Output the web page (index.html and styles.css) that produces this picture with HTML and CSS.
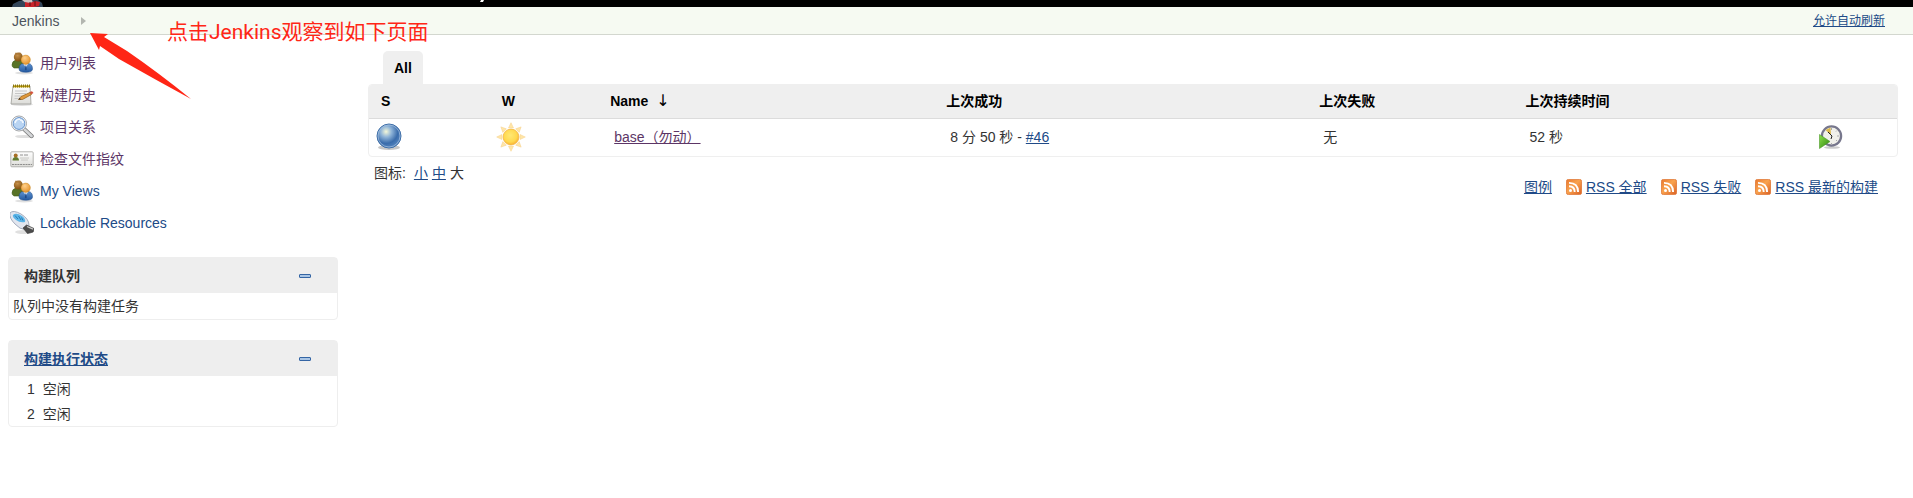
FILE: index.html
```html
<!DOCTYPE html>
<html lang="zh-CN">
<head>
<meta charset="utf-8">
<meta name="viewport" content="width=device-width, initial-scale=1">
<title>Jenkins</title>
<link rel="stylesheet" href="styles.css">
</head>
<body>
<svg class="defs" aria-hidden="true">
  <defs>
    <linearGradient id="orange" x1="0" y1="0" x2="1" y2="1"><stop offset="0" stop-color="#e8782e"/><stop offset=".45" stop-color="#f9a34e"/><stop offset="1" stop-color="#d95f23"/></linearGradient>
    <radialGradient id="ball" cx=".38" cy=".32" r=".65"><stop offset="0" stop-color="#f5f8d8"/><stop offset=".35" stop-color="#8fb4d8"/><stop offset=".75" stop-color="#3a6cab"/><stop offset="1" stop-color="#4f80bb"/></radialGradient>
    <radialGradient id="sun" cx=".45" cy=".4" r=".6"><stop offset="0" stop-color="#ffe873"/><stop offset=".7" stop-color="#ffd84e"/><stop offset="1" stop-color="#f9b233"/></radialGradient>
    <radialGradient id="brown" cx=".4" cy=".3" r=".7"><stop offset="0" stop-color="#c9924d"/><stop offset="1" stop-color="#81500f"/></radialGradient>
    <radialGradient id="face" cx=".4" cy=".3" r=".7"><stop offset="0" stop-color="#ffd08a"/><stop offset="1" stop-color="#e5932c"/></radialGradient>
    <linearGradient id="blue" x1="0" y1="0" x2="0" y2="1"><stop offset="0" stop-color="#5d92d0"/><stop offset="1" stop-color="#2459a0"/></linearGradient>
    <linearGradient id="paper" x1="0" y1="0" x2="0" y2="1"><stop offset="0" stop-color="#fff"/><stop offset="1" stop-color="#dcdcd8"/></linearGradient>
    <linearGradient id="play" x1="0" y1="0" x2="1" y2="1"><stop offset="0" stop-color="#8be04a"/><stop offset="1" stop-color="#2f8510"/></linearGradient>
    <symbol id="i-people" viewBox="0 0 24 24">
      <ellipse cx="14" cy="22" rx="9" ry="1.500" fill="#000" opacity=".12"/>
      <path d="M2 14q0-4 4-5h5q4 1 4 5v3H4q-2-1-2-3z" fill="#587327" stroke="#3f5a17" stroke-width=".6"/>
      <circle cx="8.300" cy="6" r="4.500" fill="url(#brown)"/><path d="M5 3.500l.6-2 2 1 2.700-1 1 2z" fill="#a87636"/>
      <path d="M9 18q0-5 4-5.500h5.500q4 .5 4 5.500 0 3.300-6.700 3.300T9 18z" fill="url(#blue)" stroke="#204a87" stroke-width=".5"/>
      <path d="M13.500 13h4.500l-2.200 3.500z" fill="#e6eefa"/><path d="M15.500 14.500h.7l.5 4-.9 1-.9-1z" fill="#204a87"/>
      <circle cx="15.700" cy="8.800" r="4.700" fill="url(#face)" stroke="#c17d11" stroke-width=".4"/>
    </symbol>
    <symbol id="i-note" viewBox="0 0 24 24">
      <ellipse cx="12" cy="21.500" rx="11" ry="1.500" fill="#000" opacity=".13"/>
      <path d="M3 3h17l1 18H1z" fill="url(#paper)" stroke="#9a9a96" stroke-width=".8"/>
      <path d="M3 2.500h17v1.800H3z" fill="#c4a000"/><path d="M3.500 1.500v3m2-3v3m2-3v3m2-3v3m2-3v3m2-3v3m2-3v3m2-3v3m2-3v3" stroke="#8b7710"/>
      <path d="M5 8h12M5 10.500h11M4.500 13h7M4.500 15.500h4" stroke="#c6c6c6"/>
      <path d="M8.500 16.500l2.500-3 9-4 1.500 2-9 5z" fill="#e0983b" stroke="#905c15" stroke-width=".7"/><path d="M19.500 9l2.500-.8 1.500 1.800-2 1.300z" fill="#d3503c"/><path d="M8.500 16.500l2.500-.2-1.500-1.300z" fill="#222"/>
    </symbol>
    <symbol id="i-search" viewBox="0 0 24 24">
      <ellipse cx="14" cy="21.500" rx="9" ry="1.600" fill="#000" opacity=".13"/>
      <path d="M14 14l7.500 7" stroke="#777" stroke-width="4.400" stroke-linecap="round"/><path d="M14 14l7.500 7" stroke="#d4d6d8" stroke-width="2.800" stroke-linecap="round"/>
      <circle cx="9" cy="8.500" r="7.500" fill="#fff" stroke="#a2a5a8"/><circle cx="9" cy="8.500" r="5.900" fill="#b9d4f2" stroke="#5486c4" stroke-width=".9"/>
      <path d="M5 8q1-4 5-4M10 5q3 0 3 3" fill="none" stroke="#f2f8ff" stroke-width="1.600"/>
    </symbol>
    <symbol id="i-card" viewBox="0 0 24 24">
      <rect x=".8" y="4.800" width="22.400" height="15" rx="1" fill="url(#paper)" stroke="#adada9" stroke-width=".9"/>
      <path d="M2.500 13.500q0-3.500 3.200-3.500T9 13.500z" fill="#617d31"/><circle cx="5.700" cy="8.500" r="2" fill="#a76f25"/>
      <path d="M10 8h3m1 0h4" stroke="#888" stroke-width=".9"/><path d="M10 11h9M11 13h7" stroke="#c4c4c0" stroke-width=".9"/><path d="M2 17.500h20" stroke="#777" stroke-width=".8" stroke-dasharray="2 .7"/>
    </symbol>
    <symbol id="i-usb" viewBox="0 0 24 24">
      <ellipse cx="14" cy="21" rx="9" ry="2" fill="#000" opacity=".12"/>
      <path d="M0 2q3-3.500 11 1 8 5 8 11 0 4.500-4 4.500-5 0-10-5.500-6-6-5-11z" fill="#e2e6ef" stroke="#9ba5b7" stroke-width=".9"/>
      <path d="M3 4q3-3 9 1 4 3 3 6-5 1-9-2Q2 6 3 4z" fill="#5bb5e8"/><path d="M5 4.500l3 3.500m.5-3l2.500 4m.5-2.500l1.500 3" stroke="#1c6ca6" stroke-width=".8"/>
      <path d="M13 17l3.500-3 7.500 3.500-.8 3.500-5.700 1.500z" fill="#4c4c4c" stroke="#333" stroke-width=".6"/><path d="M17 15.500l6 2.700" stroke="#c9c9c9" stroke-width="1.300"/>
    </symbol>
    <symbol id="i-rss" viewBox="0 0 16 16">
      <rect x=".4" y=".4" width="15.200" height="15.200" rx="2" fill="url(#orange)" stroke="#de7431" stroke-width=".8"/>
      <circle cx="4.500" cy="11.500" r="1.500" fill="#fff"/><path d="M3 7.300q5.700 0 5.700 5.700M3 3.900q9.100 0 9.100 9.100" fill="none" stroke="#fff" stroke-width="1.900"/>
    </symbol>
    <symbol id="i-minus" viewBox="0 0 12 4"><rect x=".5" y=".5" width="11" height="3" rx=".5" fill="#a9c5e5" stroke="#3465a4"/></symbol>
  </defs>
</svg>

<header class="banner">
  <svg class="butler" width="34" height="7" viewBox="0 0 34 7" aria-hidden="true"><path d="M1 7l1-3 6-3 4-1h15l4 3 1 4z" fill="#34465a"/><path d="M11 0h10l1 3-6 1z" fill="#cfc3c3"/><path d="M14 2l5 1 5-2 5 1-1 4-5 1H14z" fill="#c9242b"/><path d="M19 2v4M24 1v5" stroke="#5a1518"/></svg>
  <svg class="caption-tail" width="5" height="2" viewBox="0 0 5 2" aria-hidden="true"><path d="M1 0h3l-1 2H0z" fill="#fff"/></svg>
</header>
<nav class="crumbs">
  <div class="trail"><a href="#">Jenkins</a><svg width="5" height="8" viewBox="0 0 5 8" aria-hidden="true"><path d="M0 0l5 4-5 4z" fill="#b3b6b0"/></svg></div>
  <a class="refresh" href="#">允许自动刷新</a>
</nav>

<div class="note">
  <span>点击Jenkins观察到如下页面</span>
  <svg width="101" height="67" viewBox="0 0 101 67" aria-hidden="true"><path d="M0 0L18 1l-4 3 23 14q32 22 64 48Q66 47 29 26L10 13l-1 4z" fill="#ff2616"/></svg>
</div>

<div class="page">
  <aside class="side">
    <ul class="tasks">
      <li><a class="seen" href="#"><svg><use href="#i-people"/></svg>用户列表</a></li>
      <li><a class="seen" href="#"><svg><use href="#i-note"/></svg>构建历史</a></li>
      <li><a class="seen" href="#"><svg><use href="#i-search"/></svg>项目关系</a></li>
      <li><a class="seen" href="#"><svg><use href="#i-card"/></svg>检查文件指纹</a></li>
      <li><a href="#"><svg><use href="#i-people"/></svg>My Views</a></li>
      <li><a href="#"><svg><use href="#i-usb"/></svg>Lockable Resources</a></li>
    </ul>
    <section class="pane">
      <h2><span>构建队列</span><button type="button" aria-label="折叠构建队列"><svg><use href="#i-minus"/></svg></button></h2>
      <p>队列中没有构建任务</p>
    </section>
    <section class="pane">
      <h2><a href="#">构建执行状态</a><button type="button" aria-label="折叠构建执行状态"><svg><use href="#i-minus"/></svg></button></h2>
      <table class="executors">
        <tr><td>1</td><td>空闲</td></tr>
        <tr><td>2</td><td>空闲</td></tr>
      </table>
    </section>
  </aside>

  <main class="main">
    <div class="tabs"><a href="#">All</a></div>
    <div class="jobs">
      <table>
        <colgroup><col class="c-status"><col class="c-weather"><col class="c-name"><col class="c-success"><col class="c-failure"><col class="c-duration"><col></colgroup>
        <thead><tr><th>S</th><th>W</th><th>Name <span class="sort">↓</span></th><th>上次成功</th><th>上次失败</th><th>上次持续时间</th><th></th></tr></thead>
        <tbody><tr>
          <td class="icon"><svg width="28" height="30" viewBox="0 0 28 30"><ellipse cx="14" cy="25.500" rx="11" ry="2.500" fill="#000" opacity=".22"/><circle cx="14" cy="14" r="12" fill="url(#ball)" stroke="#3f6fa8"/><circle cx="14" cy="14" r="11" fill="none" stroke="#a7c2df" stroke-width=".7"/></svg></td>
          <td class="icon"><svg width="30" height="30" viewBox="0 0 30 30"><g fill="#ffe6a8" stroke="#f6d08a" stroke-width=".5"><path id="ray" d="M12.500 6L15 .7 17.500 6z"/><use href="#ray" transform="rotate(45 15 15)"/><use href="#ray" transform="rotate(90 15 15)"/><use href="#ray" transform="rotate(135 15 15)"/><use href="#ray" transform="rotate(180 15 15)"/><use href="#ray" transform="rotate(225 15 15)"/><use href="#ray" transform="rotate(270 15 15)"/><use href="#ray" transform="rotate(315 15 15)"/></g><circle cx="15" cy="15" r="7.900" fill="url(#sun)" stroke="#f5b642" stroke-width=".8"/></svg></td>
          <td><a class="seen" href="#">base（勿动）</a></td>
          <td>8 分 50 秒 - <a href="#">#46</a></td>
          <td>无</td>
          <td>52 秒</td>
          <td class="icon"><button type="button" aria-label="构建"><svg width="24" height="24" viewBox="0 0 24 24"><ellipse cx="13" cy="22.500" rx="8" ry="1.300" fill="#000" opacity=".2"/><circle cx="12.500" cy="11" r="9.600" fill="#f0f0ea" stroke="#77778c" stroke-width="2.300"/><path d="M12 10L6.500 5l5-2.500z" fill="#dcb94b"/><path d="M12.500 3v2M20 11h-2M18 5.500l-1 1M18 16l-1-1M12.500 18v1" stroke="#aaa"/><path d="M9 7l4 4-1 3" fill="none" stroke="#222"/><path d="M.5 9.500L11 16.500.5 23.500z" fill="url(#play)" stroke="#4d9a2a" stroke-width=".6"/></svg></button></td>
        </tr></tbody>
      </table>
    </div>
    <div class="below">
      <div class="sizes"><span class="label">图标:</span><a href="#">小</a><a href="#">中</a><span>大</span></div>
      <div class="feeds">
        <a href="#">图例</a>
        <span><svg><use href="#i-rss"/></svg><a href="#">RSS 全部</a></span>
        <span><svg><use href="#i-rss"/></svg><a href="#">RSS 失败</a></span>
        <span><svg><use href="#i-rss"/></svg><a href="#">RSS 最新的构建</a></span>
      </div>
    </div>
  </main>
</div>
</body>
</html>
```
FILE: styles.css
```css
* { box-sizing: border-box; }
body {
  margin: 0;
  background: #fff;
  color: #333;
  font: 14px/20px "Liberation Sans", "Noto Sans CJK SC", sans-serif;
}
a { color: #204a87; }
a.seen { color: #5c3566; }
svg { display: block; flex: none; }
button { display: block; padding: 0; border: 0; background: none; }
.defs { position: absolute; width: 0; height: 0; }

.banner { position: relative; height: 7px; padding-left: 11px; background: #000; overflow: hidden; }
.caption-tail { position: absolute; top: 0; left: 480px; }
.crumbs {
  display: flex;
  justify-content: space-between;
  align-items: center;
  height: 28px;
  padding: 0 28px 0 12px;
  background: #f6faf2;
  border-bottom: 1px solid #d3d7cf;
}
.trail { display: flex; align-items: center; gap: 22px; }
.trail a { color: #4d545d; text-decoration: none; }
.refresh { font-size: 12px; }

.note {
  position: absolute;
  top: 16px;
  left: 167px;
  color: #ff2616;
  font: 21px/32px Roboto, "Noto Sans CJK SC", sans-serif;
  white-space: nowrap;
}
.note svg { position: absolute; top: 17px; left: -77px; }

.page { display: flex; gap: 30px; padding: 12px 15px 0 8px; }
.side { flex: none; width: 330px; }
.tasks { margin: 0 0 18px; padding: 0; list-style: none; }
.tasks a { display: flex; align-items: center; gap: 6px; height: 32px; padding-left: 2px; text-decoration: none; }
.tasks svg { width: 24px; height: 24px; }

.pane { margin-bottom: 20px; border: 1px solid #eee; border-radius: 4px; }
.pane h2 {
  display: flex;
  justify-content: space-between;
  align-items: center;
  height: 35px;
  margin: 0;
  padding: 0 26px 0 15px;
  background: #eee;
  font-size: 14px;
}
.pane h2 svg { width: 12px; height: 4px; }
.pane p { margin: 0; padding: 3px 4px; }
.executors { border-spacing: 0; padding-left: 18px; }
.executors td { height: 25px; padding: 0 8px 0 0; }

.main { flex: 1; min-width: 0; padding-top: 4px; }
.tabs { display: flex; padding-left: 15px; }
.tabs a {
  padding: 7px 11px 6px;
  border-radius: 5px 5px 0 0;
  background: #efefef;
  color: #000;
  font-weight: bold;
  text-decoration: none;
}
.jobs { border: 1px solid #efefef; border-radius: 4px; overflow: hidden; }
.jobs table { width: 100%; border-collapse: collapse; table-layout: fixed; }
.jobs th { height: 33px; padding: 0 12px; border-bottom: 1px solid #dcdcdc; background: #efefef; color: #000; text-align: left; }
.jobs td { height: 38px; padding: 0 16px; }
.jobs td.icon { padding: 0 6px; }
.sort { padding-left: 4px; font: 16px/20px "DejaVu Sans", sans-serif; }
.c-status { width: 7.9%; }
.c-weather { width: 7.1%; }
.c-name { width: 22%; }
.c-success { width: 24.4%; }
.c-failure { width: 13.5%; }
.c-duration { width: 19.6%; }

.below { display: flex; justify-content: space-between; padding: 6px 20px 0 6px; }
.sizes { display: flex; gap: 4px; }
.sizes .label { margin-right: 4px; }
.feeds { display: flex; gap: 14px; padding-top: 14px; }
.feeds span { display: flex; align-items: center; gap: 4px; }
.feeds svg { width: 16px; height: 16px; }
```
